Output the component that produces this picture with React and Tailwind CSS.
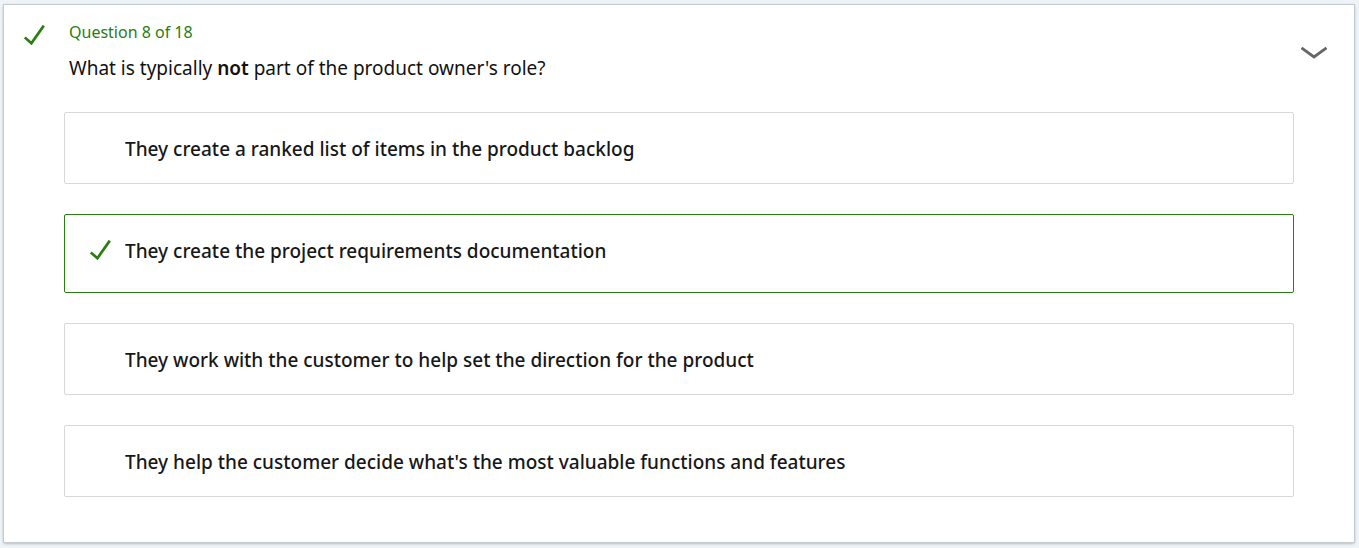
const answers = [
  { text: "They create a ranked list of items in the product backlog" },
  { text: "They create the project requirements documentation", correct: true },
  { text: "They work with the customer to help set the direction for the product" },
  { text: "They help the customer decide what's the most valuable functions and features" },
];

function Check() {
  return (
    <svg width="21" height="21" viewBox="0 0 21 21" fill="none" aria-hidden="true">
      <path d="M0.8 12.4 L7.4 18.2 L19.8 0.6" stroke="#2a7d12" strokeWidth="2.7" />
    </svg>
  );
}

function Answer({ text, correct }) {
  return (
    <li
      className={
        correct
          ? "flex h-[79px] items-start rounded-[2px] border border-[#2a7d12] pt-[22px]"
          : "flex h-[72px] items-start rounded-[2px] border border-[#d8d8d8] pt-[22px]"
      }
    >
      <span className="flex w-[60px] shrink-0 justify-end pr-[14px] pt-[3px]">
        {correct && <Check />}
      </span>
      <span className="text-[19px] leading-7 font-medium text-[#171717]">{text}</span>
    </li>
  );
}

export default function App() {
  return (
    <main className="min-h-screen bg-[#eef3f8] pt-[5px] pr-[5px] pb-[6px] pl-1 font-['Noto_Sans',sans-serif]">
      <section className="bg-white pr-[60px] pb-[45px] pl-[60px] shadow-[0_0_0_1px_#c4cacd,0_1px_3px_#8c9494]">
        <header className="-mx-10 flex items-start">
          <span className="w-[45px] shrink-0 pt-5">
            <Check />
          </span>
          <div className="grow">
            <p className="pt-[15px] text-base leading-6 text-[#2a7d12]">Question 8 of 18</p>
            <h1 className="pt-[10px] text-[19px] leading-7 font-normal text-[#111111]">
              What is typically <strong className="font-semibold">not</strong> part of the product owner's role?
            </h1>
          </div>
          <button type="button" aria-label="Collapse question" className="mt-10 mr-[7px] shrink-0">
            <svg width="26" height="15" viewBox="0 0 26 15" fill="none" aria-hidden="true">
              <path d="M0.5 2.8 L13 12 L25.5 2.8" stroke="#666666" strokeWidth="2.8" />
            </svg>
          </button>
        </header>
        <ul className="flex flex-col gap-[30px] pt-[30px]">
          {answers.map((answer) => (
            <Answer key={answer.text} {...answer} />
          ))}
        </ul>
      </section>
    </main>
  );
}
